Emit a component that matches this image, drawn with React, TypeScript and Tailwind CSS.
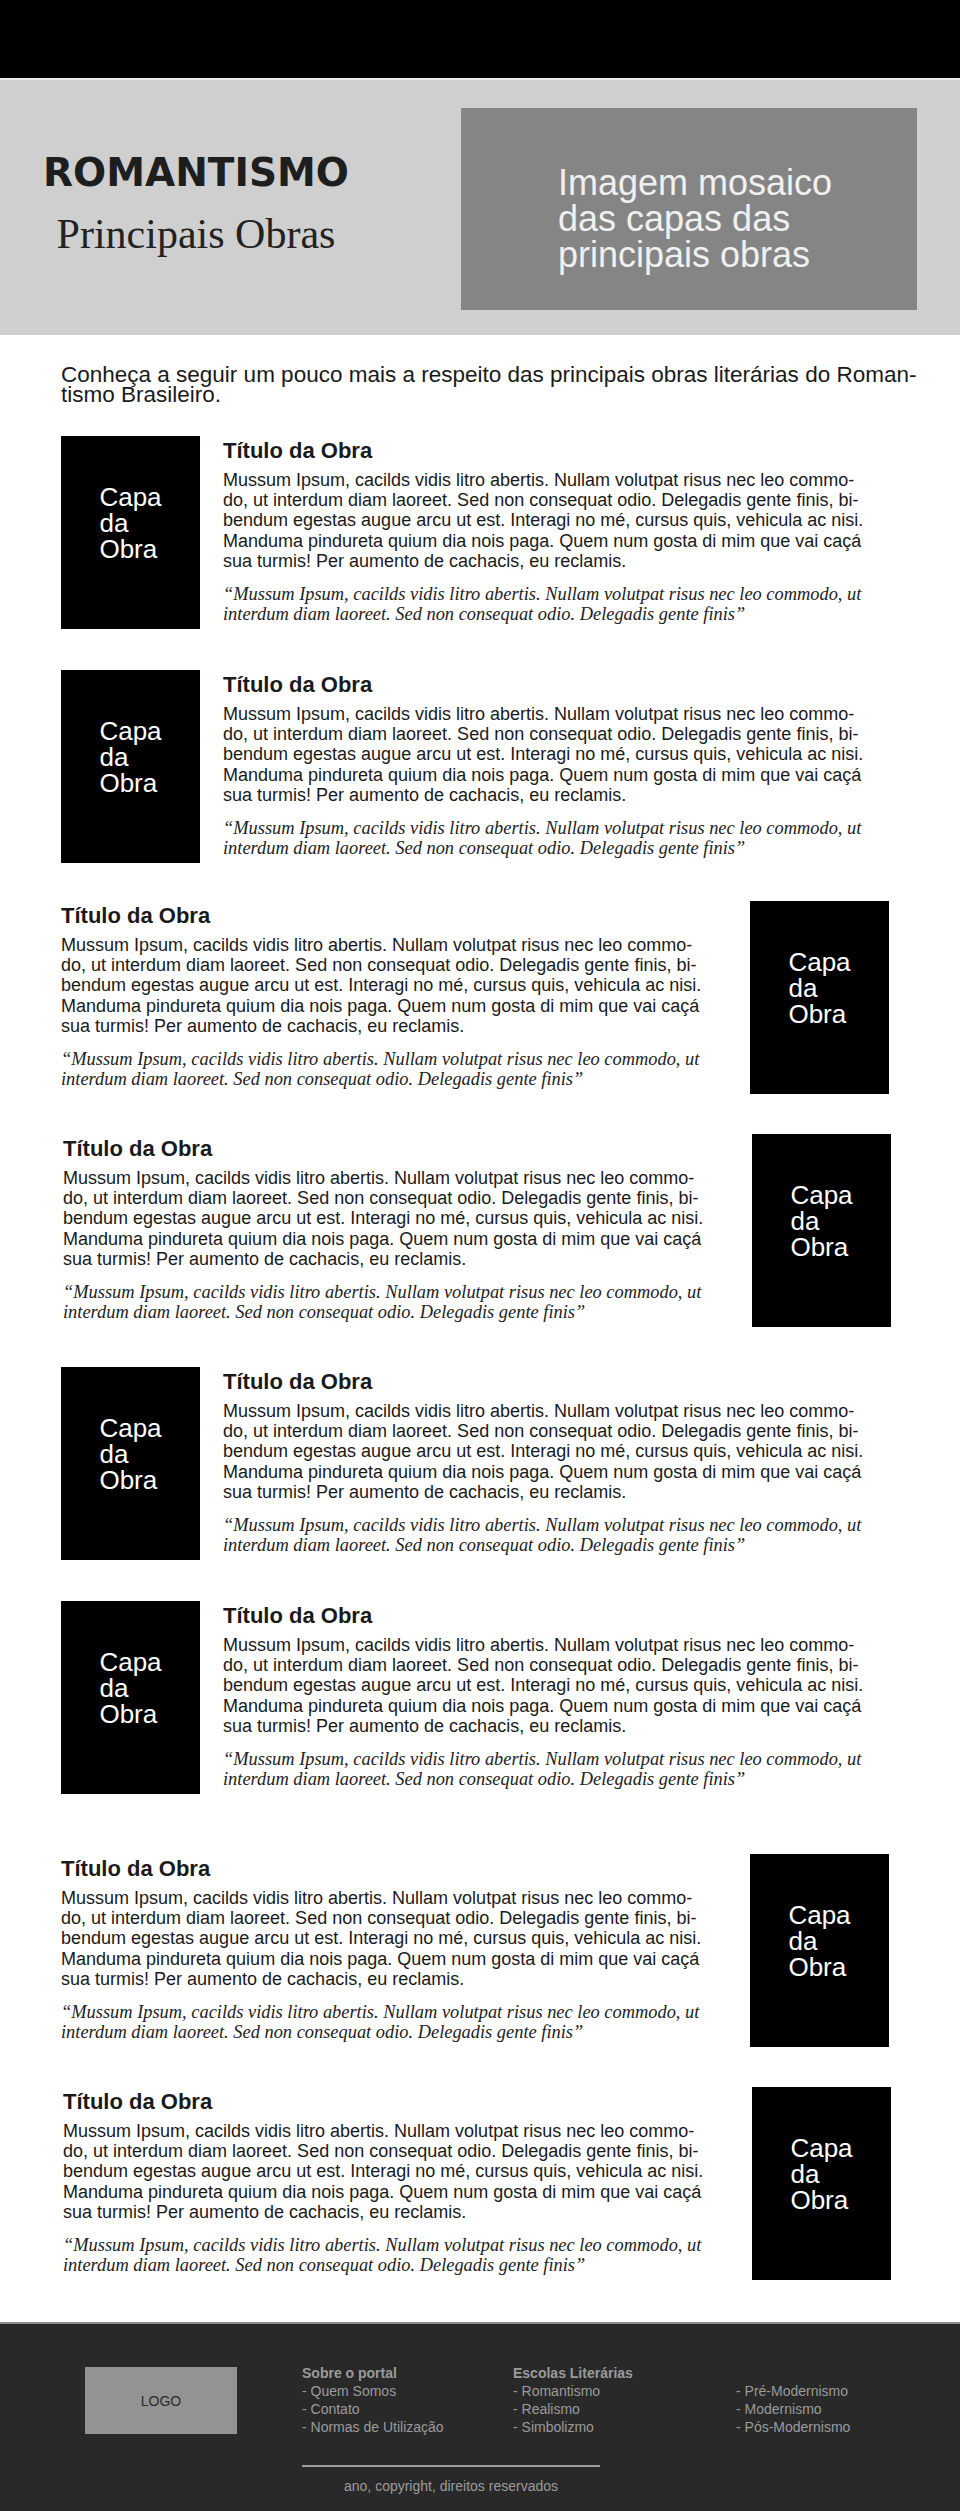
const paraLines = [
  "Mussum Ipsum, cacilds vidis litro abertis. Nullam volutpat risus nec leo commo-",
  "do, ut interdum diam laoreet. Sed non consequat odio. Delegadis gente finis, bi-",
  "bendum egestas augue arcu ut est. Interagi no mé, cursus quis, vehicula ac nisi.",
  "Manduma pindureta quium dia nois paga. Quem num gosta di mim que vai caçá",
  "sua turmis! Per aumento de cachacis, eu reclamis.",
];

const quoteLines = [
  "“Mussum Ipsum, cacilds vidis litro abertis. Nullam volutpat risus nec leo commodo, ut",
  "interdum diam laoreet. Sed non consequat odio. Delegadis gente finis”",
];

// side = where the cover sits; mt = space above the block
const obras = [
  { side: "left", mt: "mt-[31px]", shift: "" },
  { side: "left", mt: "mt-[41px]", shift: "" },
  { side: "right", mt: "mt-[38px]", shift: "" },
  { side: "right", mt: "mt-[40px]", shift: "ml-[2px]" },
  { side: "left", mt: "mt-[40px]", shift: "" },
  { side: "left", mt: "mt-[41px]", shift: "" },
  { side: "right", mt: "mt-[60px]", shift: "" },
  { side: "right", mt: "mt-[40px]", shift: "ml-[2px]" },
];

function Capa() {
  return (
    <div className="w-[139px] h-[193px] shrink-0 bg-black flex justify-center pt-[48px]">
      <div className="text-white text-[26px] leading-[26px]">
        Capa
        <br />
        da
        <br />
        Obra
      </div>
    </div>
  );
}

function Texto({ width }: { width: string }) {
  return (
    <div className={`${width} pt-[3px]`}>
      <h2 className="font-bold text-[22px] leading-[24px] text-[#1a1a1a]">Título da Obra</h2>
      <p className="mt-[7px] text-[18px] leading-[20.2px] text-[#1a1a1a]">
        {paraLines.map((l) => (
          <span key={l} className="block whitespace-nowrap">
            {l}
          </span>
        ))}
      </p>
      <p className="mt-[13px] font-['Liberation_Serif',serif] italic text-[18.4px] leading-[20px] text-[#222]">
        {quoteLines.map((l) => (
          <span key={l} className="block whitespace-nowrap">
            {l}
          </span>
        ))}
      </p>
    </div>
  );
}

export default function App() {
  return (
    <div className="w-[960px] h-[2511px] flex flex-col bg-white font-['Liberation_Sans',Arial,sans-serif]">
      {/* Top bar */}
      <div className="h-[78px] bg-black" />
      <div className="h-[2px] bg-[#ececec]" />

      {/* Banner */}
      <div className="h-[255px] bg-[#cfcfcf] flex">
        <div className="w-[392px] flex flex-col items-center pt-[73px]">
          <h1 className="font-['DejaVu_Sans',sans-serif] font-bold text-[39px] leading-[39px] text-[#1e1e1e]">
            ROMANTISMO
          </h1>
          <p className="mt-[21px] font-['Liberation_Serif',serif] text-[42px] leading-[42px] text-[#222]">
            Principais Obras
          </p>
        </div>
        <div className="ml-[69px] mt-[28px] w-[456px] h-[202px] bg-[#858585] pl-[97px] pt-[57px]">
          <p className="text-[36px] leading-[36px] text-[#f0f0f0]">
            Imagem mosaico
            <br />
            das capas das
            <br />
            principais obras
          </p>
        </div>
      </div>

      {/* Content */}
      <main className="flex-1 pl-[61px] pt-[30px]">
        <p className="text-[22.5px] leading-[20px] text-[#1a1a1a] whitespace-nowrap">
          Conheça a seguir um pouco mais a respeito das principais obras literárias do Roman-
          <br />
          tismo Brasileiro.
        </p>

        {obras.map((o, i) =>
          o.side === "left" ? (
            <div key={i} className={`flex ${o.mt} ${o.shift}`}>
              <Capa />
              <div className="ml-[23px]">
                <Texto width="w-[660px]" />
              </div>
            </div>
          ) : (
            <div key={i} className={`flex ${o.mt} ${o.shift}`}>
              <Texto width="w-[689px]" />
              <Capa />
            </div>
          )
        )}
      </main>

      {/* Footer */}
      <footer className="h-[189px] border-t-2 border-[#8c8c8c] bg-[#292929] text-[#9b9b9b] text-[14px] leading-[18px]">
        <div className="flex pt-[40px]">
          <div className="ml-[85px] mt-[3px] w-[152px] h-[67px] bg-[#939393] flex items-center justify-center text-[#2b2b2b]">
            LOGO
          </div>
          <div className="ml-[65px] w-[211px]">
            <p className="font-bold">Sobre o portal</p>
            <p>- Quem Somos</p>
            <p>- Contato</p>
            <p>- Normas de Utilização</p>
          </div>
          <div className="w-[223px]">
            <p className="font-bold">Escolas Literárias</p>
            <p>- Romantismo</p>
            <p>- Realismo</p>
            <p>- Simbolizmo</p>
          </div>
          <div>
            <p>&nbsp;</p>
            <p>- Pré-Modernismo</p>
            <p>- Modernismo</p>
            <p>- Pós-Modernismo</p>
          </div>
        </div>
        <div className="ml-[302px] w-[298px] mt-[29px]">
          <div className="h-[2px] bg-[#9b9b9b]" />
          <p className="mt-[10px] text-center">ano, copyright, direitos reservados</p>
        </div>
      </footer>
    </div>
  );
}
